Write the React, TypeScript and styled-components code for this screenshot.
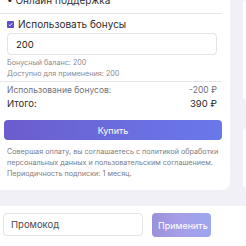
import styled, { createGlobalStyle } from "styled-components";

const GlobalStyle = createGlobalStyle`
  html, body {
    margin: 0;
    padding: 0;
    background: #f1f0f6;
    overflow: hidden;
    font-family: Inter, "Noto Sans", sans-serif;
  }
`;

const Page = styled.div`
  width: 246px;
  height: 246px;
  overflow: hidden;
  display: flex;
  flex-direction: column;
`;

const Top = styled.div`
  display: flex;
  align-items: flex-start;
`;

const Card = styled.div`
  width: 230px;
  margin-top: -8px;
  background: #ffffff;
  border-radius: 0 0 8px 0;
  padding: 0 0 11px 0;
  box-sizing: border-box;
`;

const Side = styled.div`
  margin-left: 13px;
  flex: 1;
  display: flex;
  flex-direction: column;
  gap: 28px;
`;

const SideBlock = styled.div<{ $h: number }>`
  height: ${(p) => p.$h}px;
  background: #ffffff;
  border-radius: 6px 0 0 6px;
`;

const Feature = styled.div`
  padding-left: 7px;
  height: 16px;
  line-height: 16px;
  font-size: 10px;
  color: #333;
`;

const Divider = styled.div<{ $mt: number }>`
  margin-top: ${(p) => p.$mt}px;
  margin-right: 8px;
  height: 1px;
  background: #e6e5ea;
`;

const Section = styled.div`
  padding: 0 13px 0 7px;
`;

const CheckRow = styled.label`
  display: flex;
  align-items: center;
  gap: 4px;
  height: 14px;
  margin-top: 3px;
  font-size: 10px;
  color: #2c2c2c;
`;

const Check = styled.span`
  width: 7px;
  height: 7px;
  border-radius: 1px;
  background: #5b4fd0;
  display: flex;
  align-items: center;
  justify-content: center;
`;

const Field = styled.div`
  margin-top: 2px;
  height: 20px;
  border: 1px solid #e3e2e8;
  border-radius: 4px;
  display: flex;
  align-items: center;
  padding-left: 8px;
  font-size: 9.5px;
  color: #222;
`;

const Hint = styled.div<{ $first?: boolean }>`
  margin-top: ${(p) => (p.$first ? 2 : 0)}px;
  height: 11px;
  line-height: 11px;
  font-size: 7.2px;
  color: #8a8a92;
`;

const SumRow = styled.div<{ $strong?: boolean }>`
  display: flex;
  justify-content: space-between;
  height: 14px;
  line-height: 14px;
  font-size: ${(p) => (p.$strong ? 9.5 : 8.5)}px;
  color: ${(p) => (p.$strong ? "#2a2a2a" : "#707078")};
`;

const SumBlock = styled.div`
  margin-top: 1px;
`;

const BuyButton = styled.button`
  display: block;
  margin: 9px -5px 0 -3px;
  width: calc(100% + 8px);
  height: 20px;
  border: none;
  border-radius: 4px;
  background: linear-gradient(90deg, #6c5ccd 0%, #6a6fe0 60%, #6a78ea 100%);
  color: #fff;
  font-family: inherit;
  font-size: 9px;
`;

const Legal = styled.p`
  margin: 6px -8px 0 0;
  font-size: 7.2px;
  line-height: 11px;
  color: #7c7c84;
  white-space: nowrap;
`;

const PromoBar = styled.div`
  margin-top: 16px;
  height: 40px;
  background: #ffffff;
  box-sizing: border-box;
  padding: 7px 3px 0;
  display: flex;
  gap: 9px;
`;

const PromoInput = styled.input`
  width: 140px;
  height: 23px;
  box-sizing: border-box;
  border: 1px solid #e3e2e8;
  border-radius: 4px;
  padding: 0 7px;
  font-family: inherit;
  font-size: 9.5px;
  color: #444;
  outline: none;
  &::placeholder {
    color: #4a4a52;
  }
`;

const ApplyButton = styled.button`
  width: 59px;
  height: 24px;
  border: none;
  border-radius: 4px;
  background: linear-gradient(90deg, #9991d9 0%, #a79ee8 45%, #9ca6ef 100%);
  color: #fff;
  font-family: inherit;
  font-size: 9px;
`;

export default function App() {
  return (
    <Page>
      <GlobalStyle />
      <Top>
        <Card>
          <Feature>• Онлайн поддержка</Feature>
          <Divider $mt={5} />
          <Section>
            <CheckRow>
              <Check>
                <svg width="5" height="5" viewBox="0 0 10 10">
                  <path d="M1.5 5.2 L4 7.6 L8.6 2.4" fill="none" stroke="#fff" strokeWidth="1.8" />
                </svg>
              </Check>
              Использовать бонусы
            </CheckRow>
            <Field>200</Field>
            <Hint $first>Бонусный баланс: 200</Hint>
            <Hint>Доступно для применения: 200</Hint>
          </Section>
          <Divider $mt={2} />
          <Section>
            <SumBlock>
              <SumRow>
                <span>Использование бонусов:</span>
                <span>-200 ₽</span>
              </SumRow>
              <SumRow $strong>
                <span>Итого:</span>
                <span>390 ₽</span>
              </SumRow>
            </SumBlock>
            <BuyButton>Купить</BuyButton>
            <Legal>
              Совершая оплату, вы соглашаетесь с политикой обработки
              <br />
              персональных данных и пользовательским соглашением.
              <br />
              Периодичность подписки: 1 месяц.
            </Legal>
          </Section>
        </Card>
        <Side>
          <SideBlock $h={100} />
          <SideBlock $h={60} />
        </Side>
      </Top>
      <PromoBar>
        <PromoInput placeholder="Промокод" />
        <ApplyButton>Применить</ApplyButton>
      </PromoBar>
    </Page>
  );
}
